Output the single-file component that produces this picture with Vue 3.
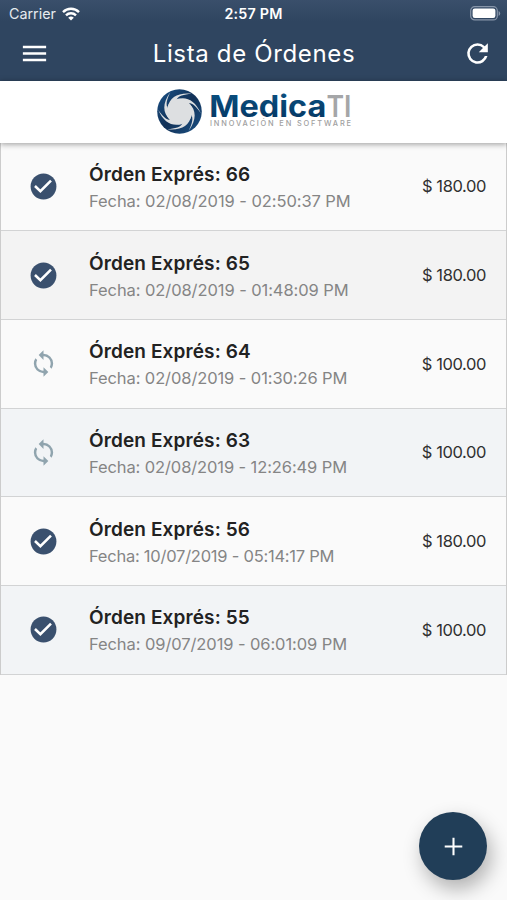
<script setup>
import { ref } from 'vue'

const orders = ref([
    { id: 66, date: '02/08/2019 - 02:50:37 PM', price: '180.00', done: true, bg: '#fafafa', tracking: '-0.07px' },
    { id: 65, date: '02/08/2019 - 01:48:09 PM', price: '180.00', done: true, bg: '#f3f3f3', tracking: '-0.08px' },
    { id: 64, date: '02/08/2019 - 01:30:26 PM', price: '100.00', done: false, bg: '#fafafa', tracking: '-0.1px' },
    { id: 63, date: '02/08/2019 - 12:26:49 PM', price: '100.00', done: false, bg: '#f2f4f6', tracking: '-0.11px' },
    { id: 56, date: '10/07/2019 - 05:14:17 PM', price: '180.00', done: true, bg: '#fafafa', tracking: '-0.24px' },
    { id: 55, date: '09/07/2019 - 06:01:09 PM', price: '100.00', done: true, bg: '#f2f4f6', tracking: '-0.09px' }
])

const blades = [10, 70, 130, 190, 250, 310]
</script>

<template>
    <div class="screen">
        <header class="top">
            <div class="status">
                <div class="carrier">
                    <span>Carrier</span>
                    <svg width="18" height="14" viewBox="0 0 18 14" fill="none" stroke="#fff" stroke-width="2.4">
                        <path d="M1 5.1a11.4 11.4 0 0 1 16 0" />
                        <path d="M4 8.3a7.1 7.1 0 0 1 10 0" />
                        <path d="M9 13.6L6.2 10.8a4 4 0 0 1 5.6 0z" fill="#fff" stroke="none" />
                    </svg>
                </div>
                <span class="time">2:57 PM</span>
                <svg class="battery" width="31" height="15" viewBox="0 0 31 15">
                    <rect x=".7" y=".7" width="26.6" height="13.2" rx="4" fill="none" stroke="#8795a9" stroke-width="1.2" />
                    <rect x="2.6" y="2.6" width="22.8" height="9.4" rx="2.2" fill="#fff" />
                    <path d="M28.6 5v5q1.6-.8 1.6-2.5T28.6 5z" fill="#8795a9" />
                </svg>
            </div>
            <div class="bar">
                <svg width="31" height="31" viewBox="0 0 24 24" fill="#fff">
                    <path d="M3 18h18v-2H3v2zm0-5h18v-2H3v2zm0-7v2h18V6H3z" />
                </svg>
                <h1>Lista de Órdenes</h1>
                <svg width="31" height="31" viewBox="0 0 24 24" fill="#fff">
                    <path d="M17.65 6.35A7.96 7.96 0 0 0 12 4a8 8 0 1 0 7.73 10h-2.08A6 6 0 1 1 12 6c1.66 0 3.14.69 4.22 1.78L13 11h7V4l-2.35 2.35z" />
                </svg>
            </div>
        </header>

        <div class="logo">
            <svg width="207" height="56" viewBox="0 0 207 56">
                <defs>
                    <linearGradient id="ring" x1="0" y1="0" x2="1" y2="1">
                        <stop offset="0" stop-color="#1a5288" />
                        <stop offset=".5" stop-color="#123157" />
                        <stop offset="1" stop-color="#1b5286" />
                    </linearGradient>
                    <linearGradient id="word" x1="0" y1="0" x2="0" y2="1">
                        <stop offset="0" stop-color="#0b5384" />
                        <stop offset="1" stop-color="#043561" />
                    </linearGradient>
                </defs>
                <g transform="translate(29.5 30.5)">
                    <circle r="22.3" fill="url(#ring)" />
                    <circle r="12.8" fill="#dddfe1" />
                    <path
                        v-for="angle in blades"
                        :key="angle"
                        :transform="`rotate(${angle})`"
                        d="M-12.5 -2C-12 -12 -5 -18.5 9 -19.5C1 -17.5 -4 -15 -5 -11z"
                        fill="#dddfe1"
                    />
                </g>
                <text x="59.3" y="35.6" class="medica" textLength="117" lengthAdjust="spacingAndGlyphs">Medica</text>
                <text x="176.5" y="35.6" class="ti" textLength="25" lengthAdjust="spacingAndGlyphs">TI</text>
                <text x="60" y="45.4" class="slogan" textLength="141">INNOVACIÓN EN SOFTWARE</text>
            </svg>
        </div>

        <ul class="orders">
            <li v-for="order in orders" :key="order.id" :style="{ backgroundColor: order.bg }">
                <svg v-if="order.done" class="state" width="31" height="31" viewBox="0 0 24 24">
                    <circle cx="12" cy="12" r="10" fill="#3a506e" />
                    <path d="M5.4 11.6l4.2 4L17.8 7.4" fill="none" stroke="#fff" stroke-width="2" />
                </svg>
                <svg v-else class="state" width="31" height="29" viewBox="0 0 24 24" fill="#90a4ae">
                    <path d="M12 4V1L8 5l4 4V6a6 6 0 0 1 5.24 8.8l1.46 1.46A7.93 7.93 0 0 0 20 12a8 8 0 0 0-8-8zm0 14a6 6 0 0 1-5.24-8.8L5.3 7.74A7.93 7.93 0 0 0 4 12a8 8 0 0 0 8 8v3l4-4-4-4v3z" />
                </svg>
                <div class="info">
                    <h2>Órden Exprés: {{ order.id }}</h2>
                    <p :style="{ letterSpacing: order.tracking }">Fecha: {{ order.date }}</p>
                </div>
                <span class="price">$ {{ order.price }}</span>
            </li>
        </ul>

        <button class="add" aria-label="Agregar">
            <svg width="31" height="31" viewBox="0 0 24 24" fill="#fff">
                <path d="M18.8 12.8h-6v6h-1.6v-6h-6v-1.6h6v-6h1.6v6h6z" />
            </svg>
        </button>
    </div>
</template>

<style>
body {
    margin: 0;
    background: #fafafa;
}
</style>

<style scoped>
.screen {
    position: relative;
    width: 507px;
    height: 900px;
    overflow: hidden;
    background: #fafafa;
    font-family: Inter, "Liberation Sans", sans-serif;
}

.top {
    height: 81px;
    background: linear-gradient(#3a4f6b, #2f4560 22px);
    color: #fff;
}

.status {
    display: grid;
    grid-template-columns: 1fr auto 1fr;
    align-items: center;
    height: 27px;
    padding: 0 6px 0 9px;
    font-size: 14.3px;
}

.carrier {
    display: flex;
    align-items: center;
    gap: 6px;
    color: #e6eaef;
}

.time {
    margin-left: -3px;
    font-weight: 600;
    font-size: 14.3px;
    letter-spacing: 0.2px;
}

.battery {
    justify-self: end;
}

.bar {
    display: flex;
    align-items: center;
    justify-content: space-between;
    height: 53px;
    padding: 0 14px 0 19px;
}

h1 {
    margin: 0 0 0 -4px;
    font-size: 24px;
    font-weight: 400;
    letter-spacing: 0.65px;
}

.logo {
    position: relative;
    display: flex;
    justify-content: center;
    height: 61.5px;
    background: #fff;
    box-shadow: 0 1px 6px rgba(0, 0, 0, 0.4);
}

.medica {
    font-size: 30px;
    font-weight: 700;
    fill: url(#word);
}

.ti {
    font-size: 30px;
    font-weight: 600;
    fill: #a5a6a8;
}

.slogan {
    font-size: 7.4px;
    font-weight: 500;
    fill: #a0a0a0;
}

.orders {
    margin: 0;
    padding: 0;
    list-style: none;
    border: 1px solid #ccc;
    border-width: 0 1px;
}

.orders li {
    display: flex;
    align-items: center;
    box-sizing: border-box;
    height: 88.7px;
    padding: 0 20px 0 27px;
    border-bottom: 1px solid #d2d3d4;
}

.state {
    flex: none;
}

.info {
    flex: 1;
    padding: 2px 0 0 30px;
    white-space: nowrap;
}

.info h2 {
    margin: 0;
    font-size: 19px;
    font-weight: 600;
    line-height: 27px;
    letter-spacing: 0.12px;
    color: #222;
}

.info p {
    margin: 0;
    font-size: 16.5px;
    line-height: 26px;
    color: #858585;
}

.price {
    font-size: 16.5px;
    letter-spacing: -0.4px;
    color: #303030;
}

.add {
    position: absolute;
    right: 20px;
    bottom: 20px;
    display: flex;
    align-items: center;
    justify-content: center;
    width: 68px;
    height: 68px;
    padding: 0;
    border: none;
    border-radius: 50%;
    background: #213e58;
    box-shadow: 4px 9px 20px rgba(0, 0, 0, 0.3);
}
</style>
